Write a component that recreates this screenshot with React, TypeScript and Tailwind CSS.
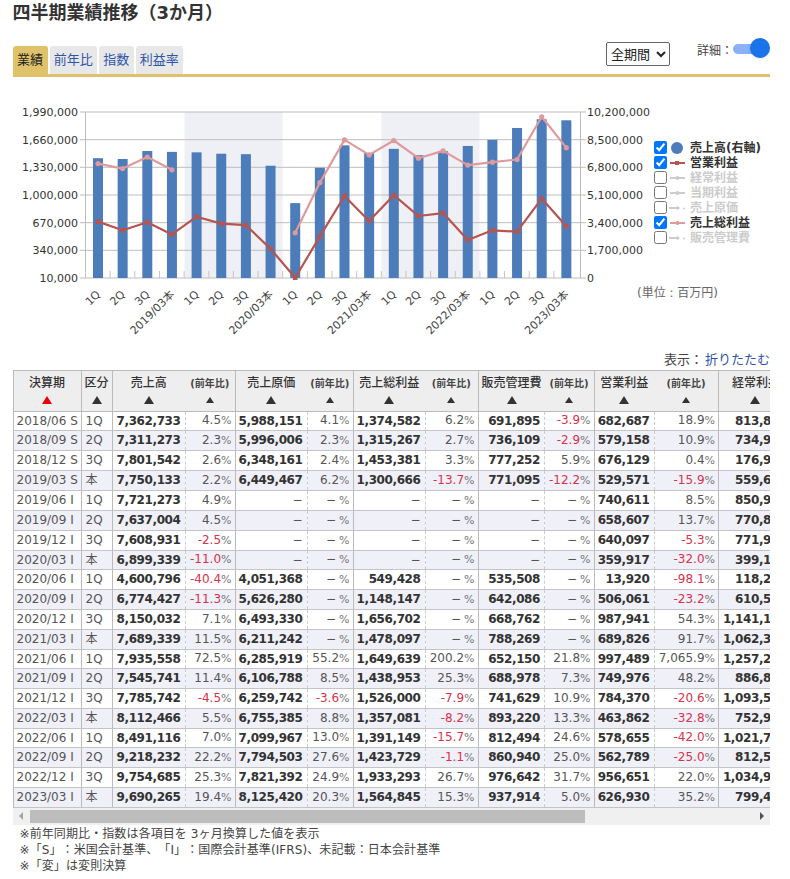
import React from "react";

const font = `"DejaVu Sans", "Noto Sans CJK JP", sans-serif`;

// 決算期, 区分, 売上高, 前年比, 売上原価, 前年比, 売上総利益, 前年比, 販管費, 前年比, 営業利益, 前年比, 経常利益(見切れ)
const rows: string[][] = [
  ["2018/06 S", "1Q", "7,362,733", "4.5", "5,988,151", "4.1", "1,374,582", "6.2", "691,895", "-3.9", "682,687", "18.9", "813,8"],
  ["2018/09 S", "2Q", "7,311,273", "2.3", "5,996,006", "2.3", "1,315,267", "2.7", "736,109", "-2.9", "579,158", "10.9", "734,9"],
  ["2018/12 S", "3Q", "7,801,542", "2.6", "6,348,161", "2.4", "1,453,381", "3.3", "777,252", "5.9", "676,129", "0.4", "176,9"],
  ["2019/03 S", "本", "7,750,133", "2.2", "6,449,467", "6.2", "1,300,666", "-13.7", "771,095", "-12.2", "529,571", "-15.9", "559,6"],
  ["2019/06 I", "1Q", "7,721,273", "4.9", "−", "−", "−", "−", "−", "−", "740,611", "8.5", "850,9"],
  ["2019/09 I", "2Q", "7,637,004", "4.5", "−", "−", "−", "−", "−", "−", "658,607", "13.7", "770,8"],
  ["2019/12 I", "3Q", "7,608,931", "-2.5", "−", "−", "−", "−", "−", "−", "640,097", "-5.3", "771,9"],
  ["2020/03 I", "本", "6,899,339", "-11.0", "−", "−", "−", "−", "−", "−", "359,917", "-32.0", "399,1"],
  ["2020/06 I", "1Q", "4,600,796", "-40.4", "4,051,368", "−", "549,428", "−", "535,508", "−", "13,920", "-98.1", "118,2"],
  ["2020/09 I", "2Q", "6,774,427", "-11.3", "5,626,280", "−", "1,148,147", "−", "642,086", "−", "506,061", "-23.2", "610,5"],
  ["2020/12 I", "3Q", "8,150,032", "7.1", "6,493,330", "−", "1,656,702", "−", "668,762", "−", "987,941", "54.3", "1,141,1"],
  ["2021/03 I", "本", "7,689,339", "11.5", "6,211,242", "−", "1,478,097", "−", "788,269", "−", "689,826", "91.7", "1,062,3"],
  ["2021/06 I", "1Q", "7,935,558", "72.5", "6,285,919", "55.2", "1,649,639", "200.2", "652,150", "21.8", "997,489", "7,065.9", "1,257,2"],
  ["2021/09 I", "2Q", "7,545,741", "11.4", "6,106,788", "8.5", "1,438,953", "25.3", "688,978", "7.3", "749,976", "48.2", "886,8"],
  ["2021/12 I", "3Q", "7,785,742", "-4.5", "6,259,742", "-3.6", "1,526,000", "-7.9", "741,629", "10.9", "784,370", "-20.6", "1,093,5"],
  ["2022/03 I", "本", "8,112,466", "5.5", "6,755,385", "8.8", "1,357,081", "-8.2", "893,220", "13.3", "463,862", "-32.8", "752,9"],
  ["2022/06 I", "1Q", "8,491,116", "7.0", "7,099,967", "13.0", "1,391,149", "-15.7", "812,494", "24.6", "578,655", "-42.0", "1,021,7"],
  ["2022/09 I", "2Q", "9,218,232", "22.2", "7,794,503", "27.6", "1,423,729", "-1.1", "860,940", "25.0", "562,789", "-25.0", "812,5"],
  ["2022/12 I", "3Q", "9,754,685", "25.3", "7,821,392", "24.9", "1,933,293", "26.7", "976,642", "31.7", "956,651", "22.0", "1,034,9"],
  ["2023/03 I", "本", "9,690,265", "19.4", "8,125,420", "20.3", "1,564,845", "15.3", "937,914", "5.0", "626,930", "35.2", "799,4"],
];

// rows that are one pixel shorter in the source table
const shortRows = [0, 7, 12, 16];

const num = (s: string) => Number(s.replace(/,/g, ""));
const catX = (i: number) => 98 + i * 24.65;
const yRight = (v: number) => 278 - (v / 10200000) * 166;
const yLeft = (v: number) => 278 - ((v - 10000) / 1980000) * 166;

const leftTicks = ["1,990,000", "1,660,000", "1,330,000", "1,000,000", "670,000", "340,000", "10,000"];
const rightTicks = ["10,200,000", "8,500,000", "6,800,000", "5,100,000", "3,400,000", "1,700,000", "0"];
const gridY = [112, 139.7, 167.3, 195, 222.7, 250.3, 278];

function linePath(col: number, y: (v: number) => number) {
  const segs: string[] = [];
  let pen = false;
  rows.forEach((r, i) => {
    if (r[col] === "−") {
      pen = false;
      return;
    }
    segs.push(`${pen ? "L" : "M"}${catX(i).toFixed(1)} ${y(num(r[col])).toFixed(1)}`);
    pen = true;
  });
  return segs.join(" ");
}

function Chart() {
  return (
    <svg width="652" height="240" viewBox="0 100 652 240" className="block shrink-0" style={{ fontFamily: font }}>
      <rect x="184.5" y="112" width="98" height="166" fill="#efeff6" />
      <rect x="381.5" y="112" width="98" height="166" fill="#efeff6" />
      {gridY.map((y) => (
        <line key={y} x1="80" x2="586" y1={y} y2={y} stroke="#bdbdbd" strokeWidth="1" />
      ))}
      <line x1="85.5" x2="85.5" y1="112" y2="278" stroke="#bdbdbd" />
      <line x1="580.5" x2="580.5" y1="112" y2="278" stroke="#bdbdbd" />
      {rows.map((_, i) => (
        <line key={i} x1={85.5 + i * 24.65} x2={85.5 + i * 24.65} y1="271" y2="278" stroke="#c4c4c4" />
      ))}
      {rows.map((r, i) => {
        const top = yRight(num(r[2]));
        return <rect key={i} x={catX(i) - 5} y={top} width="10" height={278 - top} fill="#4c7dba" />;
      })}
      <path d={linePath(6, yLeft)} fill="none" stroke="#df9a9b" strokeWidth="2.2" strokeLinejoin="round" />
      {rows.map((r, i) =>
        r[6] === "−" ? null : <circle key={i} cx={catX(i)} cy={yLeft(num(r[6]))} r="2.6" fill="#df9a9b" />
      )}
      <path d={linePath(10, yLeft)} fill="none" stroke="#b7544f" strokeWidth="2.2" strokeLinejoin="round" />
      {rows.map((r, i) => (
        <rect key={i} x={catX(i) - 2.3} y={yLeft(num(r[10])) - 2.3} width="4.6" height="4.6" fill="#b7544f" />
      ))}
      {leftTicks.map((t, i) => (
        <text key={t} x="78" y={gridY[i] + 4} textAnchor="end" fontSize="11" fill="#333">
          {t}
        </text>
      ))}
      {rightTicks.map((t, i) => (
        <text key={t} x="587" y={gridY[i] + 4} fontSize="11" fill="#333">
          {t}
        </text>
      ))}
      {rows.map((r, i) => {
        const label = r[1] === "本" ? `${r[0].slice(0, 7)}本` : r[1];
        const x = catX(i) + 3;
        return (
          <text key={i} x={x} y="295" textAnchor="end" fontSize="11" fill="#444" transform={`rotate(-45 ${x} 295)`}>
            {label}
          </text>
        );
      })}
    </svg>
  );
}

function LegendMark({ kind, color }: { kind: string; color: string }) {
  return (
    <svg width="17" height="12" viewBox="0 0 17 12" className="shrink-0">
      {kind === "circle" && <circle cx="8" cy="6" r="6" fill={color} />}
      {kind === "square" && (
        <>
          <line x1="1" x2="16" y1="6" y2="6" stroke={color} strokeWidth="2" />
          <rect x="6" y="4" width="4" height="4" fill={color} />
        </>
      )}
      {kind === "dot" && (
        <>
          <line x1="1" x2="16" y1="6" y2="6" stroke={color} strokeWidth="2" />
          <circle cx="8.5" cy="6" r="2" fill={color} />
        </>
      )}
      {kind === "dash" && (
        <>
          <line x1="0" x2="9" y1="6" y2="6" stroke={color} strokeWidth="2" />
          <path d="M8 3.5 11 6 8 8.5z" fill={color} />
          <circle cx="15" cy="6.5" r="1" fill={color} />
        </>
      )}
    </svg>
  );
}

const legend = [
  { label: "売上高(右軸)", on: true, kind: "circle", color: "#4c7dba" },
  { label: "営業利益", on: true, kind: "square", color: "#b7544f" },
  { label: "経常利益", on: false, kind: "dot", color: "#cccccc" },
  { label: "当期利益", on: false, kind: "dot", color: "#cccccc" },
  { label: "売上原価", on: false, kind: "dash", color: "#cccccc" },
  { label: "売上総利益", on: true, kind: "dot", color: "#df9a9b" },
  { label: "販売管理費", on: false, kind: "dash", color: "#cccccc" },
];

function Legend() {
  return (
    <div className="flex w-[136px] flex-col pt-[40px] pl-[2px]">
      {legend.map((l) => (
        <label key={l.label} className="flex h-[15px] items-center">
          <input type="checkbox" defaultChecked={l.on} className="m-0 h-[13px] w-[13px] shrink-0" />
          <span className="ml-[2px] flex">
            <LegendMark kind={l.kind} color={l.color} />
          </span>
          <span className={`ml-[4px] text-[12px] font-bold whitespace-nowrap ${l.on ? "text-[#333]" : "text-[#ccc]"}`}>
            {l.label}
          </span>
        </label>
      ))}
      <div className="mt-[39px] -ml-[17px] text-[12px] text-[#666] whitespace-nowrap">(単位 : 百万円)</div>
    </div>
  );
}

function Ratio({ v }: { v: string }) {
  const minus = v.startsWith("-");
  return (
    <span className={minus ? "text-[#d8324a]" : "text-[#555]"}>
      {v}
      <span className={`text-[11px] text-[#777] ${v === "−" ? "ml-[3px]" : ""}`}>%</span>
    </span>
  );
}

function Sort({ small, red }: { small?: boolean; red?: boolean }) {
  return (
    <span
      className={`mx-auto mt-[5px] block h-0 w-0 border-x-solid border-x-transparent border-b-solid ${
        small
          ? "border-x-[4px] border-b-[6px] border-b-[#333]"
          : red
            ? "border-x-[5px] border-b-[8px] border-b-[#e8000b]"
            : "border-x-[5px] border-b-[8px] border-b-[#333]"
      }`}
    />
  );
}

function MainTh({ label, red, joined }: { label: string; red?: boolean; joined?: boolean }) {
  return (
    <th
      className={`border-y border-l border-[#bbb] bg-[#eee] px-0 pt-[4px] align-top text-[12px] font-medium text-[#333] whitespace-nowrap ${
        joined ? "" : "border-r"
      }`}
    >
      <div className="h-[16px] leading-[16px]">{label}</div>
      <Sort red={red} />
    </th>
  );
}

function SubTh() {
  return (
    <th className="border-y border-r border-y-[#bbb] border-r-[#bbb] bg-[#eee] px-0 pt-[5px] align-top text-[10px] font-bold text-[#444] whitespace-nowrap">
      <div className="h-[16px] leading-[16px]">(前年比)</div>
      <Sort small />
    </th>
  );
}

function DataTable() {
  return (
    <div className="overflow-hidden">
      <table className="w-[757.5px] table-fixed border-collapse" style={{ fontFamily: font }}>
        <colgroup>
          <col className="w-[68px]" />
          <col className="w-[31px]" />
          <col className="w-[73px]" />
          <col className="w-[50px]" />
          <col className="w-[72px]" />
          <col className="w-[46px]" />
          <col className="w-[72px]" />
          <col className="w-[53px]" />
          <col className="w-[66.5px]" />
          <col className="w-[49.5px]" />
          <col className="w-[60px]" />
          <col className="w-[64.5px]" />
          <col className="w-[52.5px]" />
        </colgroup>
        <thead>
          <tr className="h-[40.5px]">
            <MainTh label="決算期" red />
            <MainTh label="区分" />
            <MainTh label="売上高" joined />
            <SubTh />
            <MainTh label="売上原価" joined />
            <SubTh />
            <MainTh label="売上総利益" joined />
            <SubTh />
            <MainTh label="販売管理費" joined />
            <SubTh />
            <MainTh label="営業利益" joined />
            <SubTh />
            <th className="border-y border-l border-[#bbb] bg-[#eee] px-0 pt-[4px] align-top text-left text-[12px] font-medium text-[#333] whitespace-nowrap">
              <div className="h-[16px] pl-[13px] leading-[16px]">経常利益</div>
              <div className="ml-[31px] w-[10px]">
                <Sort />
              </div>
            </th>
          </tr>
        </thead>
        <tbody>
          {rows.map((r, i) => (
            <tr
              key={r[0]}
              className={`${shortRows.includes(i) ? "h-[19px]" : "h-[20px]"} ${i % 2 ? "bg-[#f0f0f8]" : "bg-white"}`}
            >
              {r.map((c, j) => {
                const base = "border-y border-y-[#c4c4c4] p-0 text-[12px] leading-[14px] whitespace-nowrap overflow-hidden";
                const bold = "text-[12px] font-bold tracking-[-0.4px] text-[#333]";
                if (j === 0) return <td key={j} className={`${base} border-x border-x-[#bbb] pl-[3px] text-[#555]`}>{c}</td>;
                if (j === 1) return <td key={j} className={`${base} border-r border-r-[#bbb] pl-[4px] text-[#555]`}>{c}</td>;
                if (j === 12) return <td key={j} className={`${base} text-right ${bold}`}>{c}</td>;
                if (j % 2 === 0)
                  return (
                    <td
                      key={j}
                      className={`${base} border-r [border-right-style:dashed] border-r-[#ccc] pr-[4px] text-right ${
                        c === "−" ? "text-[#555]" : bold
                      }`}
                    >
                      {c}
                    </td>
                  );
                return (
                  <td key={j} className={`${base} border-r border-r-[#bbb] pr-[3px] text-right text-[#555]`}>
                    <Ratio v={c} />
                  </td>
                );
              })}
            </tr>
          ))}
        </tbody>
      </table>
    </div>
  );
}

function ScrollBar() {
  return (
    <div className="flex h-[17px] items-center bg-[#f0f0f0]">
      <div className="flex w-[17px] justify-center">
        <div className="h-0 w-0 border-y-[4px] border-r-[4px] border-y-transparent border-r-[#a3a3a3]" />
      </div>
      <div className="h-[13px] w-[555px] bg-[#bdbdbd]" />
      <div className="flex flex-1 justify-end pr-[6px]">
        <div className="h-0 w-0 border-y-[4px] border-l-[4px] border-y-transparent border-l-[#505050]" />
      </div>
    </div>
  );
}

const tabs = ["前年比", "指数", "利益率"];

export default function App() {
  return (
    <div className="w-[790px] bg-white pr-[20px] pl-[12.5px] text-[#333]" style={{ fontFamily: font }}>
      <h1 className="h-[25px] text-[18px] leading-[25px] font-bold">四半期業績推移（3か月）</h1>

      <div className="mt-[17px] flex h-[35px] items-end justify-between border-b-[3px] border-[#dfc269]">
        <div className="flex gap-[2px]">
          <div className="flex h-[28px] w-[35px] items-center justify-center rounded-t-[3px] bg-[#dfc269] text-[13px] text-[#222]">
            業績
          </div>
          {tabs.map((t) => (
            <div key={t} className="flex h-[28px] items-center rounded-t-[3px] bg-[#e8e8e8] px-[4.25px] text-[13px] text-[#2f55a8]">
              {t}
            </div>
          ))}
        </div>
        <div className="mb-[8px] flex h-[24px] items-start">
          <select className="h-[24px] w-[64px] rounded-[2px] border border-[#666] bg-white text-[13px] text-[#222]">
            <option>全期間</option>
          </select>
          <span className="mt-[2px] ml-[27px] text-[12px] leading-[14px] text-[#444]">詳細：</span>
          <div className="relative mt-[2px] mr-[8px] h-[10px] w-[29px] rounded-full bg-[#8ab0f8]">
            <div className="absolute top-[-6px] right-[-8px] h-[20px] w-[20px] rounded-full bg-[#1a73e8] shadow" />
          </div>
        </div>
      </div>

      <div className="-ml-[12.5px] flex h-[273px] pt-[23px]">
        <Chart />
        <Legend />
      </div>

      <div className="flex h-[20px] items-center justify-end text-[13px] text-[#444]">
        表示：
        <span className="ml-[2px] text-[#2f55a8]">折りたたむ</span>
      </div>

      <DataTable />
      <ScrollBar />

      <div className="pt-[1px] pl-[7px] text-[12px] leading-[16px] tracking-[0.1px] text-[#444] [text-spacing-trim:space-all]">
        <p>※前年同期比・指数は各項目を 3ヶ月換算した値を表示</p>
        <p>※「S」：米国会計基準、「I」：国際会計基準(IFRS)、未記載：日本会計基準</p>
        <p>※「変」は変則決算</p>
      </div>
    </div>
  );
}
